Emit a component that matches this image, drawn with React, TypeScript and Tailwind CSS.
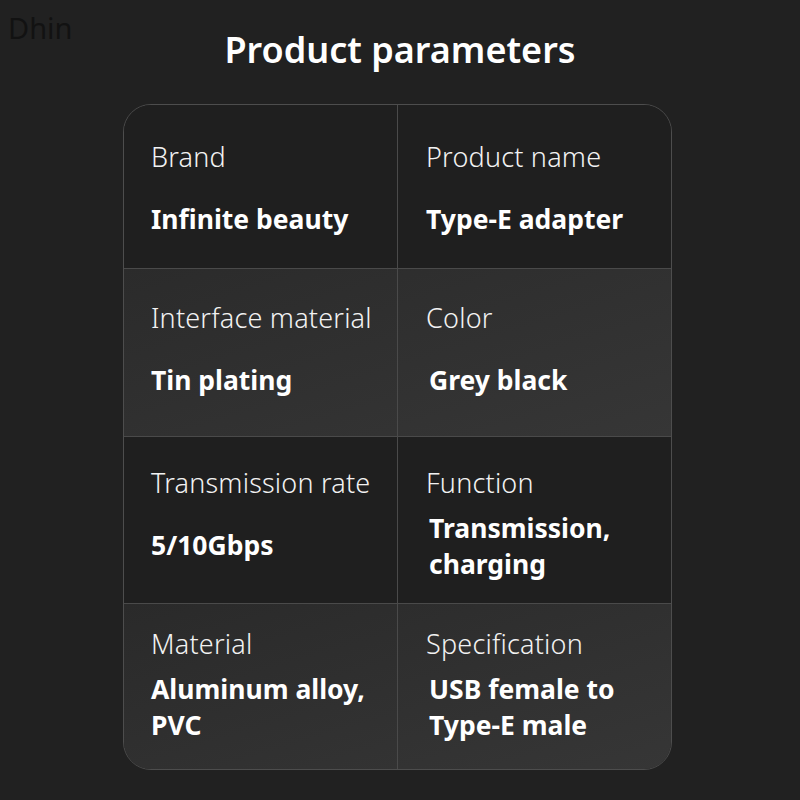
// Product parameters sheet: dark card with a 2x4 grid of label / value pairs.
const rows = [
  {
    height: "h-[164px]",
    bg: "bg-[#1f1f1f]",
    cells: [
      { label: "Brand", value: ["Infinite beauty"] },
      { label: "Product name", value: ["Type-E adapter"] },
    ],
    pad: "pt-[33px]",
  },
  {
    height: "h-[168px]",
    bg: "bg-gradient-to-br from-[#2b2b2b] to-[#363636]",
    cells: [
      { label: "Interface material", value: ["Tin plating"] },
      { label: "Color", value: ["Grey black"] },
    ],
    pad: "pt-[30px]",
  },
  {
    height: "h-[167px]",
    bg: "bg-[#1f1f1f]",
    cells: [
      { label: "Transmission rate", value: ["5/10Gbps"] },
      { label: "Function", value: ["Transmission,", "charging"] },
    ],
    pad: "pt-[27px]",
  },
  {
    height: "h-[165px]",
    bg: "bg-gradient-to-br from-[#2a2a2a] to-[#363636]",
    cells: [
      { label: "Material", value: ["Aluminum alloy,", "PVC"] },
      { label: "Specification", value: ["USB female to", "Type-E male"] },
    ],
    pad: "pt-[21px]",
  },
];

export default function App() {
  return (
    <div className="relative h-[800px] w-[800px] overflow-hidden bg-[#212121] font-['Noto_Sans','Open_Sans',sans-serif]">
      <div className="absolute left-[8px] top-[13px] text-[29px] leading-none text-[#121212]">Dhin</div>

      <h1 className="pt-[28px] text-center text-[36px] font-semibold leading-[44px] text-white">
        Product parameters
      </h1>

      <div className="ml-[123px] mt-[32px] w-[549px] overflow-hidden rounded-[28px] border-[1.5px] border-[#4d4d4d]">
        {rows.map((row, ri) => (
          <div
            key={ri}
            className={`grid grid-cols-[274px_1fr] ${row.height} ${row.bg} ${
              ri < rows.length - 1 ? "border-b-[1.5px] border-[#4a4a4a]" : ""
            }`}
          >
            {row.cells.map((cell, ci) => {
              const single = cell.value.length === 1;
              return (
                <div
                  key={cell.label}
                  className={`${row.pad} ${ci === 0 ? "border-r-[1.5px] border-[#4a4a4a] pl-[27px]" : "pl-[28px]"}`}
                >
                  <div className="text-[27px] font-light leading-[38px] tracking-[0.2px] text-[#f2f2f2]">
                    {cell.label}
                  </div>
                  <div
                    className={`${single ? "mt-[25px]" : "mt-[8px]"} text-[26.5px] font-bold leading-[36px] text-white ${
                      ci === 1 && ri > 0 ? "pl-[3px]" : ""
                    }`}
                  >
                    {cell.value.map((line) => (
                      <div key={line}>{line}</div>
                    ))}
                  </div>
                </div>
              );
            })}
          </div>
        ))}
      </div>
    </div>
  );
}
